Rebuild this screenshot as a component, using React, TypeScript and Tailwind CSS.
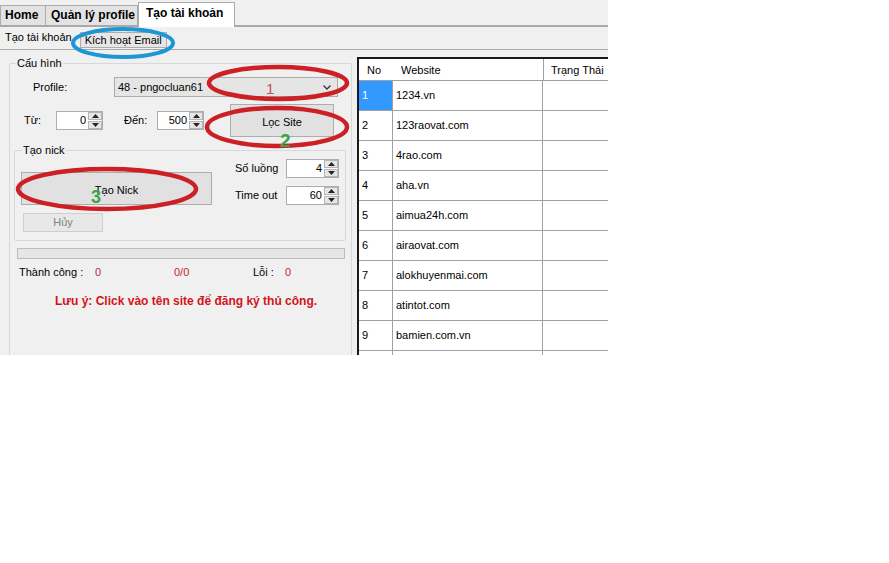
import React from "react";

function Spin({ v, cls }: { v: string; cls: string }) {
  return (
    <div className={`flex h-[19px] border border-[#abadb3] bg-white ${cls}`}>
      <div className="flex-1 text-right pr-[2px] leading-[17px]">{v}</div>
      <div className="w-[14px] flex flex-col gap-[1px] py-[0px]">
        <div className="h-[8px] bg-[#e6e6e6] border border-[#b5b5b5] flex items-center justify-center">
          <svg width="7" height="4" viewBox="0 0 7 4"><path d="M0 4 L3.5 0 L7 4Z" fill="#222" /></svg>
        </div>
        <div className="h-[8px] bg-[#e6e6e6] border border-[#b5b5b5] flex items-center justify-center">
          <svg width="7" height="4" viewBox="0 0 7 4"><path d="M0 0 L3.5 4 L7 0Z" fill="#222" /></svg>
        </div>
      </div>
    </div>
  );
}

const sites = [
  "1234.vn",
  "123raovat.com",
  "4rao.com",
  "aha.vn",
  "aimua24h.com",
  "airaovat.com",
  "alokhuyenmai.com",
  "atintot.com",
  "bamien.com.vn",
];

export default function App() {
  return (
    <div className="relative w-[889px] h-[563px] bg-white overflow-hidden font-['Liberation_Sans',Arial,sans-serif] text-[11px] text-black">
      <div className="w-[608px] h-[355px] bg-[#f0f0f0] flex flex-col overflow-hidden">
        {/* main tab strip */}
        <div className="h-[27px] flex items-end border-b-2 border-[#a9a9a9] bg-[#f0f0f0] shrink-0">
          <div className="w-[46px] h-[20px] bg-[#e3e3e3] border border-[#acacac] border-b-0 pl-[4px] font-bold text-[12px] leading-[19px]">Home</div>
          <div className="w-[92px] h-[20px] bg-[#e3e3e3] border border-[#acacac] border-l-0 border-b-0 pl-[5px] font-bold text-[12px] leading-[19px]">Quản lý profile</div>
          <div className="w-[97px] h-[25px] -mb-[2px] bg-white border border-[#acacac] border-b-0 pl-[7px] font-bold text-[12px] leading-[20px] relative">Tạo tài khoản</div>
        </div>
        {/* sub tab strip */}
        <div className="h-[23px] flex items-end border-b border-[#a9a9a9] shrink-0">
          <div className="h-[20px] pl-[5px] pr-[6px] leading-[17px] text-[11px]">Tạo tài khoản</div>
          <div className="ml-[2px] mb-[1px] h-[16px] bg-[#e6e6e6] border border-[#adadad] px-[4px] leading-[14px]">Kích hoạt Email</div>
        </div>
        {/* content */}
        <div className="flex flex-1 min-h-0">
          {/* left group */}
          <fieldset className="ml-[9px] mt-[7px] w-[343px] h-[320px] border border-[#d8d8d8] rounded-[2px] shrink-0">
            <legend className="ml-[6px] px-[1px] leading-[13px]">Cấu hình</legend>
            <div className="flex items-center mt-[7px] h-[20px]">
              <div className="ml-[23px] w-[81px]">Profile:</div>
              <div className="w-[224px] h-[20px] bg-[#e5e5e5] border border-[#acacac] flex items-center pl-[3px] pr-[6px]">
                <span className="flex-1">48 - pngocluan61</span>
                <svg width="8" height="5" viewBox="0 0 8 5"><path d="M0.5 0.5 L4 4 L7.5 0.5" stroke="#333" strokeWidth="1.3" fill="none" /></svg>
              </div>
            </div>
            <div className="flex items-center mt-[7px] h-[33px]">
              <div className="ml-[14px] w-[32px]">Từ:</div>
              <Spin v="0" cls="w-[47px]" />
              <div className="ml-[21px] w-[33px]">Đến:</div>
              <Spin v="500" cls="w-[47px]" />
              <div className="ml-[26px] w-[104px] h-[33px] bg-[#e1e1e1] border border-[#adadad] flex justify-center pt-[9px]">Lọc Site</div>
            </div>
            {/* Tạo nick */}
            <fieldset className="ml-[4px] mt-[7px] w-[332px] h-[97px] border border-[#d8d8d8] rounded-[2px]">
              <legend className="ml-[7px] px-[1px] leading-[13px]">Tạo nick</legend>
              <div className="flex">
                <div className="ml-[6px] flex flex-col">
                  <div className="mt-[15px] w-[191px] h-[33px] bg-[#e1e1e1] border border-[#adadad] flex justify-center pt-[9px]">Tạo Nick</div>
                  <div className="mt-[8px] ml-[2px] w-[80px] h-[19px] bg-[#e8e8e8] border border-[#cfcfcf] text-[#838383] flex items-center justify-center">Hủy</div>
                </div>
                <div className="ml-[23px] flex flex-col">
                  <div className="mt-[2px] flex items-center">
                    <div className="w-[51px]">Số luồng</div>
                    <Spin v="4" cls="w-[53px]" />
                  </div>
                  <div className="mt-[8px] flex items-center">
                    <div className="w-[51px]">Time out</div>
                    <Spin v="60" cls="w-[53px]" />
                  </div>
                </div>
              </div>
            </fieldset>
            <div className="ml-[7px] mt-[7px] w-[328px] h-[11px] bg-[#e6e6e6] border border-[#bcbcbc]" />
            <div className="flex mt-[6px] h-[14px] leading-[14px]">
              <div className="ml-[9px] w-[76px]">Thành công :</div>
              <div className="w-[79px] text-[#c0282c]">0</div>
              <div className="w-[79px] text-[#c0282c]">0/0</div>
              <div className="w-[32px]">Lỗi :</div>
              <div className="text-[#c0282c]">0</div>
            </div>
            <div className="mt-[15px] pl-[45px] font-bold text-[12px] text-[#d0151b] leading-[14px]">Lưu ý: Click vào tên site để đăng ký thủ công.</div>
          </fieldset>
          {/* table */}
          <div className="ml-[5px] mt-[7px] flex-1 bg-white border-l-2 border-t-2 border-[#1a1a1a] overflow-hidden">
            <div className="flex h-[22px] border-b border-[#a0a0a0] leading-[22px]">
              <div className="w-[34px] pl-[8px]">No</div>
              <div className="w-[150px] pl-[8px]">Website</div>
              <div className="flex-1 border-l border-[#a0a0a0] pl-[7px]">Trạng Thái</div>
            </div>
            {sites.map((s, i) => (
              <div key={i} className="flex h-[30px] border-b border-[#a0a0a0] leading-[29px]">
                <div className={i === 0 ? "w-[34px] pl-[3px] bg-[#3399ff] text-white border-r border-[#a0a0a0]" : "w-[34px] pl-[3px] border-r border-[#a0a0a0]"}>{i + 1}</div>
                <div className="w-[150px] pl-[3px] border-r border-[#a0a0a0]">{s}</div>
                <div className="flex-1" />
              </div>
            ))}
            <div className="flex h-[30px]">
              <div className="w-[34px] border-r border-[#a0a0a0]" />
              <div className="w-[150px] border-r border-[#a0a0a0]" />
              <div className="flex-1" />
            </div>
          </div>
        </div>
      </div>
      {/* annotation overlay */}
      <svg className="absolute left-0 top-0 pointer-events-none" width="889" height="563">
        <ellipse cx="123" cy="43" rx="50" ry="14" fill="none" stroke="#1d97d4" strokeWidth="4" />
        <ellipse cx="278" cy="83" rx="69" ry="16" fill="none" stroke="#cc2027" strokeWidth="4.5" />
        <ellipse cx="277" cy="127" rx="70" ry="19" fill="none" stroke="#cc2027" strokeWidth="4.5" />
        <ellipse cx="107" cy="189" rx="89" ry="20" fill="none" stroke="#cc2027" strokeWidth="4.5" />
        <text x="266" y="94" fontSize="15" fill="#c9504b" fontFamily="Liberation Sans, Arial, sans-serif">1</text>
        <text x="280" y="147" fontSize="19" fontWeight="bold" fill="#3aa548" fontFamily="Liberation Sans, Arial, sans-serif">2</text>
        <text x="91" y="203" fontSize="18" fontWeight="bold" fill="#3aa548" fontFamily="Liberation Sans, Arial, sans-serif">3</text>
      </svg>
    </div>
  );
}
